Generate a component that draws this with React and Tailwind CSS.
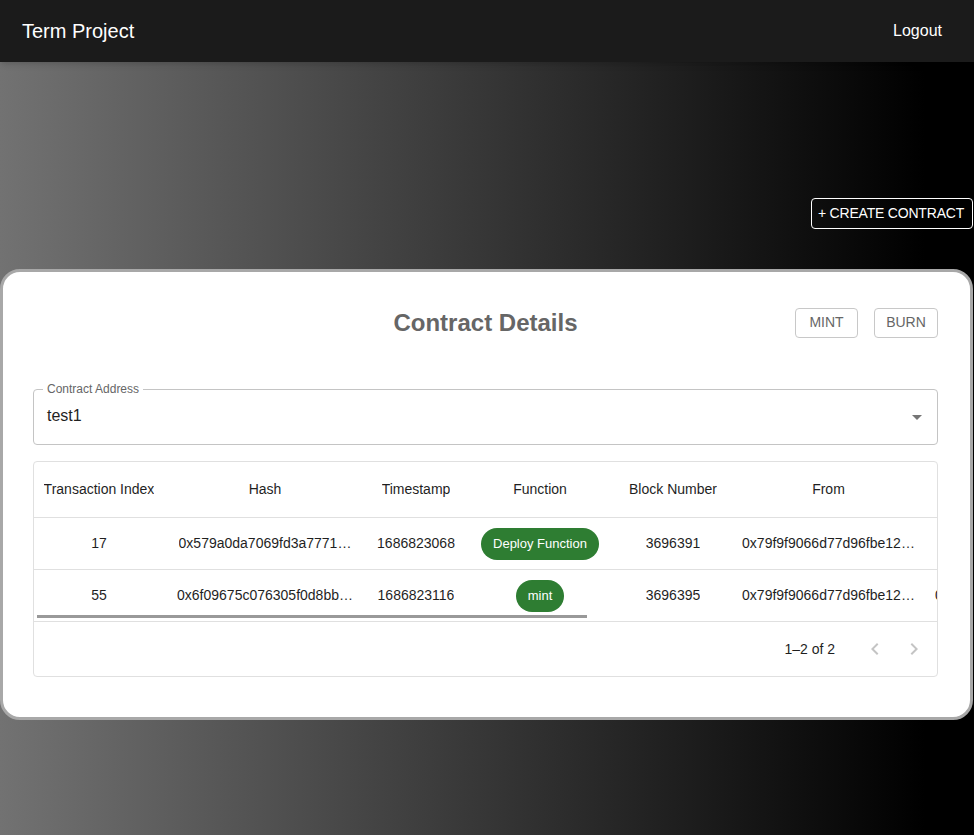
import React from 'react';

const font = { fontFamily: '"Liberation Sans", Arial, sans-serif' };

const columns = [
  { key: 'index', label: 'Transaction Index', w: 'w-[130px]', px: 'px-[4px]' },
  { key: 'hash', label: 'Hash', w: 'w-[202px]', px: 'px-[8px]' },
  { key: 'time', label: 'Timestamp', w: 'w-[100px]', px: 'px-[8px]' },
  { key: 'fn', label: 'Function', w: 'w-[148px]', px: 'px-[8px]' },
  { key: 'block', label: 'Block Number', w: 'w-[118px]', px: 'px-[8px]' },
  { key: 'from', label: 'From', w: 'w-[193px]', px: 'px-[8px]' },
  { key: 'to', label: 'To', w: 'w-[193px]', px: 'px-[10px]' },
];

const rows = [
  {
    index: '17',
    hash: '0x579a0da7069fd3a7771…',
    time: '1686823068',
    fn: 'Deploy Function',
    block: '3696391',
    from: '0x79f9f9066d77d96fbe12…',
    to: '',
  },
  {
    index: '55',
    hash: '0x6f09675c076305f0d8bb…',
    time: '1686823116',
    fn: 'mint',
    block: '3696395',
    from: '0x79f9f9066d77d96fbe12…',
    to: '0x0000000000000000000…',
  },
];

const Chip = ({ children }) => (
  <span className="inline-flex items-center h-[32px] px-[12px] rounded-full bg-[#2e7d32] text-white text-[13px]">
    {children}
  </span>
);

const Cell = ({ col, children }) => (
  <div className={`${col.w} ${col.px} shrink-0 flex items-center justify-center overflow-hidden`}>
    <span className="truncate">{children}</span>
  </div>
);

const App = () => {
  return (
    <div
      className="min-h-screen flex flex-col bg-[linear-gradient(to_right,#727272,#000000_95%)]"
      style={font}
    >
      {/* Top bar */}
      <header className="h-[62px] shrink-0 bg-[#1b1b1b] shadow-md flex items-center justify-between pl-[22px] pr-[32px] text-white">
        <span className="text-[20px]">Term Project</span>
        <span className="text-[16px]">Logout</span>
      </header>

      {/* Create contract */}
      <div className="flex justify-end mt-[136px] pr-[1px]">
        <button className="h-[31px] w-[162px] border border-white rounded-[4px] text-white text-[14px] tracking-[-0.2px] pr-[2px]">
          + CREATE CONTRACT
        </button>
      </div>

      {/* Card */}
      <div className="mt-[40px] mr-[1px] bg-white border-[3px] border-[#a8a8a8] rounded-[20px] pt-[32px] pl-[30px] pr-[32px] pb-[40px]">
        <div className="grid grid-cols-[1fr_auto_1fr] items-center h-[34px]">
          <div />
          <h2 className="text-[24px] font-bold text-[#666666] pt-[1px]">Contract Details</h2>
          <div className="flex justify-end gap-[16px]">
            <button className="h-[30px] w-[63px] border border-[#c8c8c8] rounded-[4px] text-[#666666] text-[14px]">
              MINT
            </button>
            <button className="h-[30px] w-[64px] border border-[#c8c8c8] rounded-[4px] text-[#666666] text-[14px]">
              BURN
            </button>
          </div>
        </div>

        {/* Select */}
        <div className="relative mt-[51px] h-[56px] border border-[#c4c4c4] rounded-[4px] flex items-center justify-between pl-[13px] pr-[8px]">
          <span className="absolute -top-[8px] left-[9px] px-[4px] bg-white text-[12px] text-[#666666] leading-[15px]">
            Contract Address
          </span>
          <span className="text-[16px] text-[#1f1f1f] -mt-[2px]">test1</span>
          <svg width="24" height="24" viewBox="0 0 24 24" className="fill-[#757575]">
            <path d="M7 10l5 5 5-5z" />
          </svg>
        </div>

        {/* Table */}
        <div className="mt-[16px] border border-[#e0e0e0] rounded-[4px] text-[14px] text-[#1f1f1f]">
          <div className="relative overflow-hidden">
            <div className="flex h-[56px] border-b border-[#e0e0e0]">
              {columns.map((c) => (
                <Cell key={c.key} col={c}>{c.label}</Cell>
              ))}
            </div>
            {rows.map((r, i) => (
              <div key={i} className="flex h-[52px] border-b border-[#e0e0e0]">
                {columns.map((c) => (
                  <Cell key={c.key} col={c}>
                    {c.key === 'fn' ? <Chip>{r.fn}</Chip> : r[c.key]}
                  </Cell>
                ))}
              </div>
            ))}
            {/* horizontal scroll thumb */}
            <div className="absolute left-[3px] bottom-[4px] w-[550px] h-[3px] bg-[#999999]" />
          </div>
          <div className="h-[54px] flex items-center justify-end pr-[9px]">
            <span className="mr-[28px]">1–2 of 2</span>
            <div className="flex items-center gap-[15px] pr-[2px]">
              <svg width="24" height="24" viewBox="0 0 24 24" className="fill-[#c4c4c4]">
                <path d="M15.41 16.59 10.83 12l4.58-4.59L14 6l-6 6 6 6 1.41-1.41z" />
              </svg>
              <svg width="24" height="24" viewBox="0 0 24 24" className="fill-[#c4c4c4]">
                <path d="M8.59 16.59 13.17 12 8.59 7.41 10 6l6 6-6 6-1.41-1.41z" />
              </svg>
            </div>
          </div>
        </div>
      </div>
      <div className="flex-1" />
    </div>
  );
};

export default App;
